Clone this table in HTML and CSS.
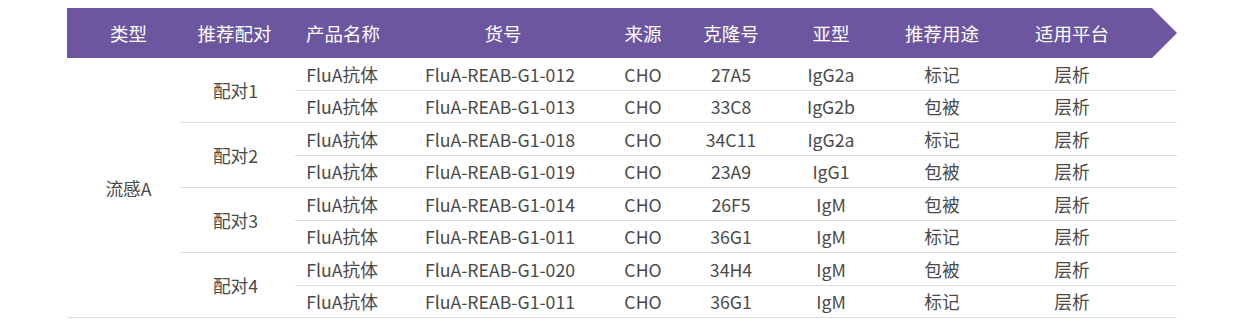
FILE: index.html
```html
<!DOCTYPE html>
<html lang="zh-CN">
<head>
<meta charset="utf-8">
<title>FluA 配对</title>
<link rel="stylesheet" href="styles.css">
</head>
<body>
<div class="table">
  <div class="head">
    <div class="hc c1">类型</div>
    <div class="hc c2">推荐配对</div>
    <div class="hc">产品名称</div>
    <div class="hc">货号</div>
    <div class="hc">来源</div>
    <div class="hc">克隆号</div>
    <div class="hc">亚型</div>
    <div class="hc">推荐用途</div>
    <div class="hc last">适用平台</div>
  </div>
  <div class="body">
    <div class="type">流感A</div>
    <div class="groups">
      <div class="group">
        <div class="pair">配对1</div>
        <div class="rows">
          <div class="row"><span>FluA抗体</span><span>FluA-REAB-G1-012</span><span>CHO</span><span>27A5</span><span>IgG2a</span><span>标记</span><span class="last">层析</span></div>
          <div class="row"><span>FluA抗体</span><span>FluA-REAB-G1-013</span><span>CHO</span><span>33C8</span><span>IgG2b</span><span>包被</span><span class="last">层析</span></div>
        </div>
      </div>
      <div class="group">
        <div class="pair">配对2</div>
        <div class="rows">
          <div class="row"><span>FluA抗体</span><span>FluA-REAB-G1-018</span><span>CHO</span><span>34C11</span><span>IgG2a</span><span>标记</span><span class="last">层析</span></div>
          <div class="row"><span>FluA抗体</span><span>FluA-REAB-G1-019</span><span>CHO</span><span>23A9</span><span>IgG1</span><span>包被</span><span class="last">层析</span></div>
        </div>
      </div>
      <div class="group">
        <div class="pair">配对3</div>
        <div class="rows">
          <div class="row"><span>FluA抗体</span><span>FluA-REAB-G1-014</span><span>CHO</span><span>26F5</span><span>IgM</span><span>包被</span><span class="last">层析</span></div>
          <div class="row"><span>FluA抗体</span><span>FluA-REAB-G1-011</span><span>CHO</span><span>36G1</span><span>IgM</span><span>标记</span><span class="last">层析</span></div>
        </div>
      </div>
      <div class="group">
        <div class="pair">配对4</div>
        <div class="rows">
          <div class="row"><span>FluA抗体</span><span>FluA-REAB-G1-020</span><span>CHO</span><span>34H4</span><span>IgM</span><span>包被</span><span class="last">层析</span></div>
          <div class="row"><span>FluA抗体</span><span>FluA-REAB-G1-011</span><span>CHO</span><span>36G1</span><span>IgM</span><span>标记</span><span class="last">层析</span></div>
        </div>
      </div>
    </div>
  </div>
</div>
</body>
</html>
```
FILE: styles.css
```css
* { box-sizing: border-box; }
body {
  margin: 0;
  background: #fff;
  font-family: "Noto Sans CJK SC", "Noto Sans", sans-serif;
  color: #4a4a4a;
}
.table {
  width: 1110px;
  margin: 8px 0 0 67px;
}
.head {
  height: 50px;
  background: #6c56a0;
  color: #fff;
  font-size: 18.5px;
  display: grid;
  grid-template-columns: 113px 115px 96px 224px 56px 120px 80px 142px 164px;
  align-items: center;
  clip-path: polygon(0 0, calc(100% - 25px) 0, 100% 50%, calc(100% - 25px) 100%, 0 100%);
}
.hc {
  text-align: center;
  white-space: nowrap;
}
.hc.c1 { padding-left: 10px; }
.hc.c2 { padding-right: 6px; }
.hc.last { padding-right: 46px; }
.body {
  display: flex;
  font-size: 17.7px;
}
.type {
  width: 113px;
  padding-left: 10px;
  display: flex;
  align-items: center;
  justify-content: center;
  border-bottom: 1px solid #dedede;
}
.groups {
  flex: 1;
  display: flex;
  flex-direction: column;
}
.group {
  display: flex;
  border-bottom: 1px solid #dedede;
}
.pair {
  width: 115px;
  padding-right: 4px;
  display: flex;
  align-items: center;
  justify-content: center;
}
.rows {
  flex: 1;
  display: flex;
  flex-direction: column;
}
.row {
  height: 32.5px;
  display: grid;
  grid-template-columns: 96px 224px 56px 120px 80px 142px 164px;
  align-items: center;
}
.row:first-child {
  border-bottom: 1px solid #dedede;
}
.group .row:last-child { height: 31.5px; }
.row span {
  text-align: center;
  white-space: nowrap;
}
.row span:first-child { padding-right: 2px; }
.row span:nth-child(2) { padding-right: 6px; }
.row span.last { padding-right: 46px; }
```
